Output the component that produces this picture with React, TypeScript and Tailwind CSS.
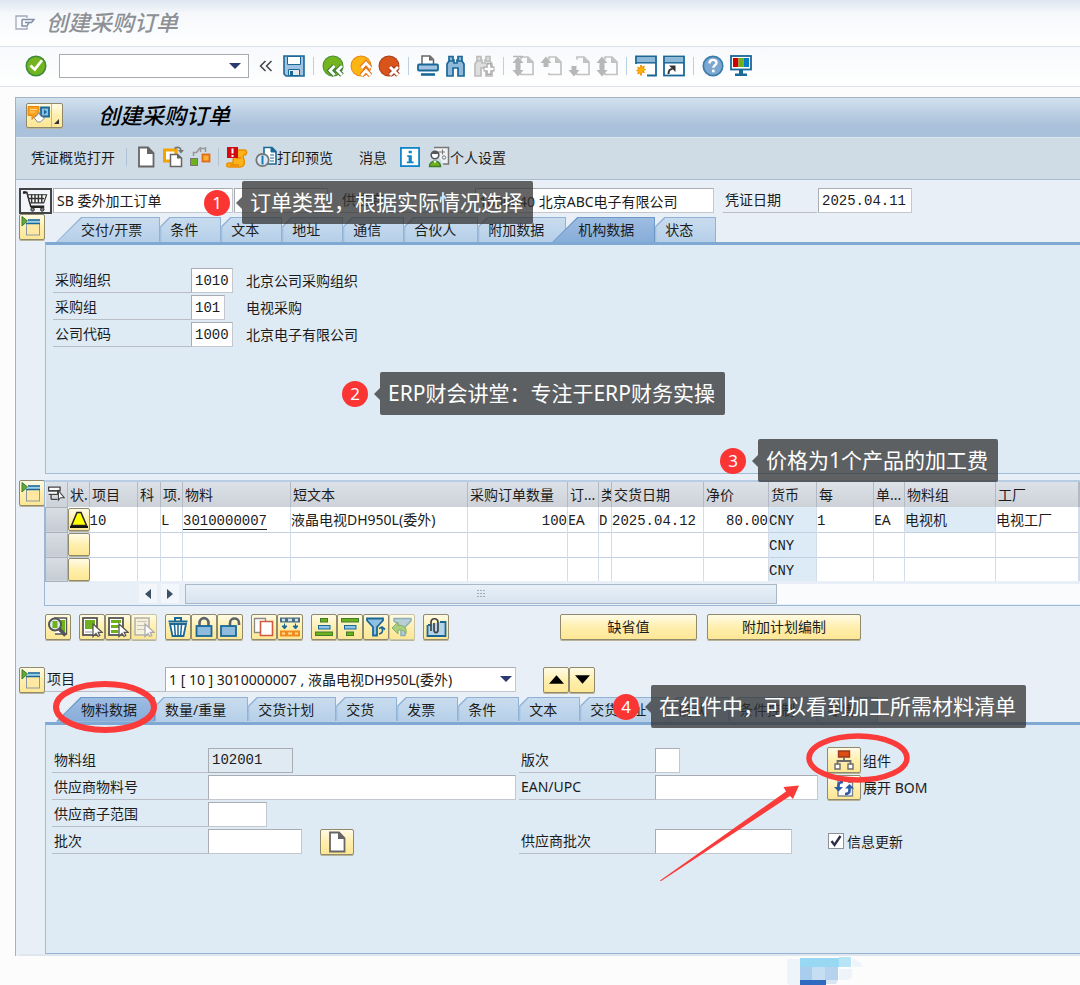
import React from "react";

type Kids = { children?: React.ReactNode };

const BLUE = "#1a6896";
const LIGHT = "#9fc3e0";
const GRAY = "#666666";
const GREEN = "#6fb11c";

function Icon({ children, size = "w-[22px] h-[22px]" }: Kids & { size?: string }) {
  return (
    <svg viewBox="0 0 22 22" className={`${size} shrink-0`} fill="none" aria-hidden="true">
      {children}
    </svg>
  );
}

/* ---------- toolbar drawings ---------- */

const CheckIcon = () => (
  <Icon>
    <circle cx="11" cy="11" r="10.5" fill="#3f8a3a" />
    <circle cx="11" cy="11" r="9" fill="#74b51f" />
    <path d="M4.5 11.5l2-2 3 3 6.5-8 2 1.5-8 10.5z" fill="#fff" />
  </Icon>
);
const SaveIcon = () => (
  <Icon>
    <path d="M1 1h20v20H3l-2-2z" fill={LIGHT} stroke={BLUE} strokeWidth="1.6" />
    <path d="M4.500 1.500h13v8h-13z" fill="#fff" stroke={BLUE} />
    <path d="M5.500 14.500h11v6h-11z" fill="#e5e9ec" stroke={BLUE} />
    <path d="M7 16h3v4.500H7z" fill={BLUE} />
  </Icon>
);
const BackIcon = () => (
  <Icon>
    <circle cx="11" cy="11" r="10.500" fill="#4b8f3c" />
    <circle cx="11" cy="11" r="9.500" fill="#74b51f" />
    <path d="M12.500 11L8 15.500l4.500 4.500M20 11l-4.500 4.500L20 20" stroke="#3c7a38" strokeWidth="5" />
    <path d="M12.500 11L8 15.500l4.500 4.500M20 11l-4.500 4.500L20 20" stroke="#fff" strokeWidth="2.800" />
  </Icon>
);
const ExitIcon = () => (
  <Icon>
    <circle cx="11" cy="11" r="10.500" fill="#e8881a" />
    <circle cx="11" cy="11" r="9.500" fill="#fcb614" />
    <path d="M11.500 13l4.500-5 4.500 5M11.500 20.500l4.500-5 4.500 5" stroke="#e8701a" strokeWidth="5" />
    <path d="M11.500 13l4.500-5 4.500 5M11.500 20.500l4.500-5 4.500 5" stroke="#fff" strokeWidth="2.800" />
  </Icon>
);
const CancelIcon = () => (
  <Icon>
    <circle cx="11" cy="11" r="10.500" fill="#a9401c" />
    <circle cx="11" cy="11" r="9.500" fill="#d9541a" />
    <path d="M12 12l8 8M20 12l-8 8" stroke="#a33a1a" strokeWidth="5" />
    <path d="M12 12l8 8M20 12l-8 8" stroke="#fff" strokeWidth="3" />
  </Icon>
);
const PrintIcon = () => (
  <Icon>
    <path d="M5 9V1h8l3.500 3.500V9" fill="#fff" stroke={GRAY} strokeWidth="1.500" />
    <path d="M12 1v4.500h4.500z" fill={GRAY} />
    <rect x="1" y="9.500" width="20" height="6" rx="1" fill={LIGHT} stroke={BLUE} strokeWidth="1.800" />
    <path d="M4 19.500h14" stroke={BLUE} strokeWidth="2.600" />
  </Icon>
);
function Binoculars({ a, b, plus }: { a: string; b: string; plus?: boolean }) {
  return (
    <Icon>
      <path d="M4 1.500h4V5h1v3h3V5h1V1.500h4V6l2 3v12h-6v-8H8v8H2V9l2-3z" fill={b} stroke={a} strokeWidth="1.700" />
      <path d="M4 6h4M13 6h4" stroke={a} strokeWidth="1.500" />
      {plus && <path d="M16 8v12M10.500 14h11" stroke="#aaa" strokeWidth="5" />}
      {plus && <path d="M16 9.500v9M11.500 14h9" stroke="#fff" strokeWidth="2.500" />}
    </Icon>
  );
}
function PageIcon({ up, down, inset }: { up?: boolean; down?: boolean; inset?: boolean }) {
  return (
    <Icon>
      <path d="M9 4.500V2h7l5 5v12.500H9V18" stroke="#c2c2c2" strokeWidth="1.700" />
      <path d="M15 1.500V8h6.500z" fill="#c2c2c2" />
      {up && <path d="M6 1.500L11.500 8H8.500v4h-5V8H.5z" fill="#b7b7b7" />}
      {down && <path d="M6 21.500l5.500-6.500H8.500v-4h-5v4H.5z" fill="#b7b7b7" />}
      {inset && <path d="M1 1.500h10" stroke="#b7b7b7" strokeWidth="1.500" />}
    </Icon>
  );
}
const NewSessionIcon = () => (
  <Icon>
    <path d="M1 9V1.500h20v19h-9" fill="#fff" stroke={BLUE} strokeWidth="1.800" />
    <path d="M2 2.500h18V7H2z" fill="#8db8d8" />
    <path d="M1 7.800h20" stroke={BLUE} strokeWidth="1.500" />
    <path d="M6 10l1 2.200 2.300-1-1 2.300 2.200 1-2.200 1 1 2.300-2.300-1L6 20.500l-1-2.700-2.300 1 1-2.300-2.200-1 2.200-1-1-2.300 2.300 1z" fill="#ffb400" stroke="#f29100" />
  </Icon>
);
const ShortcutIcon = () => (
  <Icon>
    <rect x="1" y="1.500" width="20" height="19" fill="#fff" stroke={BLUE} strokeWidth="1.800" />
    <path d="M2 2.500h18V7H2z" fill="#8db8d8" />
    <path d="M1 7.800h20" stroke={BLUE} strokeWidth="1.500" />
    <path d="M5.500 19c0-4 1-5 4-5" stroke="#333" strokeWidth="2" />
    <path d="M6 10.500h6.500V17z" fill="#333" />
  </Icon>
);
const HelpIcon = () => (
  <Icon>
    <circle cx="11" cy="11" r="9.700" fill="#7ba7d0" stroke="#3c7cab" strokeWidth="1.700" />
    <path d="M7.500 8.500c0-5 7-4.500 7-.8 0 2.500-3.200 2.500-3.200 5" stroke="#fff" strokeWidth="2.400" />
    <rect x="10" y="14.700" width="2.600" height="2.600" fill="#fff" />
  </Icon>
);
const MonitorIcon = () => (
  <Icon>
    <rect x="1" y="1" width="20" height="13.500" fill="#fff" stroke={BLUE} strokeWidth="1.800" />
    <path d="M3 3h5.500v9H3z" fill="#d00000" />
    <path d="M8.500 3h5v9h-5z" fill={GREEN} />
    <path d="M13.500 3H19v9h-5.500z" fill="#0a7cc4" />
    <path d="M9 15h4v4H9zM5 18.500h12v2.500H5z" fill={BLUE} />
  </Icon>
);
const BlankPage = () => (
  <Icon>
    <path d="M4 1.500h9l5.500 5.500v13.500H4z" fill="#fff" stroke={GRAY} strokeWidth="1.800" />
    <path d="M12 1v7h7z" fill={GRAY} />
  </Icon>
);
const CopyRefIcon = () => (
  <Icon>
    <path d="M2.500 4h11.500v11H2.500z" fill="#fff" stroke="#f5a300" strokeWidth="3" />
    <path d="M8.500 8.500h7l4 3.500v8.500h-11z" fill="#fff" stroke={GRAY} strokeWidth="1.500" />
    <path d="M15 8v4.500h5z" fill={GRAY} />
    <path d="M12.500 2.500C15.500.5 18.500 1.500 19 4" stroke="#777" strokeWidth="1.600" />
    <path d="M16 4h6l-3 3.500z" fill="#777" />
  </Icon>
);
const FlowIcon = () => (
  <Icon>
    <rect x="1.500" y="12.500" width="7" height="7" fill={GREEN} stroke="#777" />
    <rect x="13.500" y="8.500" width="7" height="7" fill="#ffae2b" stroke="#e06a1c" strokeWidth="1.800" />
    <path d="M4.500 10V6.500h3l3-4h6" stroke="#999" strokeWidth="1.600" />
    <path d="M11.500 1v5M16.500 1v5" stroke="#999" strokeWidth="1.500" />
  </Icon>
);
const HoldIcon = () => (
  <Icon>
    <path d="M8 4h10c4 0 3 5 0 5-1 0-1 2 0 5 1 4 0 7-4 7H3c-3 0-3-4 0-4h4z" fill="#ffb31a" stroke="#ef8d00" strokeWidth="1.500" />
    <path d="M10 12h5M4 19h9" stroke="#e88800" strokeWidth="1.500" />
    <rect x="1" y="1" width="11" height="11" fill="#d20a11" />
    <path d="M6.500 2.500v5M6.500 9v2" stroke="#fff" strokeWidth="2" />
  </Icon>
);
const PreviewIcon = () => (
  <Icon>
    <path d="M9 1.500h8l4 4V18H9z" fill="#fff" stroke={BLUE} strokeWidth="1.600" />
    <path d="M16 1v5h5zM15 9h4M15 12h4M15 15h4" stroke={BLUE} fill={BLUE} />
    <circle cx="7.500" cy="14" r="6.200" fill="#dbe9f4" stroke="#777" strokeWidth="1.800" />
    <path d="M7.500 9.500v9" stroke="#1d78b5" strokeWidth="2" />
  </Icon>
);
const InfoIcon = () => (
  <Icon size="w-[20px] h-[20px]">
    <rect x="1" y="1" width="20" height="20" fill="#fff" stroke="#1186c8" strokeWidth="2" />
    <path d="M9.500 4h3.500v3H9.500zM8 9h5v7h2v2H7.500v-2H9.500v-5H8z" fill="#1186c8" />
  </Icon>
);
const PersonIcon = () => (
  <Icon>
    <path d="M6 1.500h14.500V18H15" fill="#eef2f5" stroke="#777" strokeWidth="1.500" />
    <path d="M10 6h7M14.500 3.500v5" stroke="#777" />
    <circle cx="16" cy="11.500" r="1.700" stroke="#777" />
    <circle cx="7" cy="9" r="3.800" fill="#fff" stroke="#555" strokeWidth="1.600" />
    <path d="M3.500 8c1-3.500 6-3.500 7 0z" fill="#555" />
    <path d="M1.500 20.500c0-7 11-7 11 0z" fill={GREEN} stroke="#3f7d2d" strokeWidth="1.500" />
    <path d="M5.500 15l1.500 2.500L8.500 15z" fill="#fff" />
  </Icon>
);
const PanelIcon = () => (
  <Icon>
    <rect x="5.500" y="7.500" width="13" height="11.500" fill="#ffe9a2" stroke="#8c98a0" />
    <path d="M7 3.500h12v4H7z" fill="#9fd0ee" />
    <path d="M7 4h12M5 7.500h14" stroke={BLUE} strokeWidth="1.600" />
    <path d="M1 .5l5.500 4.500-5.500 5z" fill="#63a83a" stroke="#3d7d2b" />
  </Icon>
);
const CartIcon = () => (
  <svg viewBox="0 0 30 24" className="h-[24px] w-[30px]" fill="none" aria-hidden="true">
    <path d="M3 3h3l4 14.500h14" stroke="#222" strokeWidth="1.500" />
    <path d="M2 2h3v2.500H2z" fill="#222" />
    <path d="M7 5.500h19.500l-3 8.500H9z" fill="#fff" stroke="#333" strokeWidth="1.200" />
    <path d="M11 5v9M14.500 5v9M18 5v9M21.500 5v9M8 9.500h16" stroke="#333" strokeWidth="1.500" />
    <path d="M10 18.500h14" stroke="#222" strokeWidth="1.500" />
    <circle cx="12" cy="20.800" r="1.800" fill="#888" stroke="#222" />
    <circle cx="22" cy="20.800" r="1.800" fill="#888" stroke="#222" />
  </svg>
);
const ServicesIcon = () => (
  <svg viewBox="0 0 24 20" className="h-[20px] w-[24px]" fill="none" aria-hidden="true">
    <path d="M14 2.500h8v9h-8z" fill="#8cc0e4" stroke={BLUE} strokeWidth="1.800" />
    <path d="M17 4.500v5l3-2.500z" fill={BLUE} />
    <path d="M1 1.500h11v9H8l-3 4v-4H1z" fill="#fba21c" stroke="#ea8409" />
    <path d="M3 4.500h7M3 7h5" stroke="#ffd98c" />
    <path d="M7 12.500l3-2 2-3 1.500 3.500 4 2-4 4h-3z" fill="#fff" stroke="#8a8a8a" />
  </svg>
);

/* ---------- item toolbar drawings ---------- */

const Cursor = ({ c = "#555" }: { c?: string }) => (
  <path d="M12 8v12.500l3-3 2 3 1.700-1-1.500-3.200h4z" fill="#fff" stroke={c} strokeWidth="1.300" />
);
const DetailIcon = () => (
  <Icon>
    <path d="M7 2h12.500v16H8" fill="#fff" stroke="#555" strokeWidth="1.400" />
    <path d="M12 4h6v12h-6z" fill={GREEN} />
    <circle cx="8" cy="8.500" r="6" fill="#dcecf2" stroke="#555" strokeWidth="2" />
    <path d="M5.500 5h5v7h-5z" fill={GREEN} />
    <path d="M12.500 13l6 6.500" stroke="#555" strokeWidth="3.500" />
  </Icon>
);
const SelectAllIcon = () => (
  <Icon>
    <rect x="2" y="2" width="14" height="17" fill="#fff" stroke="#555" strokeWidth="1.800" />
    <path d="M4 4h10v9H4z" fill={GREEN} />
    <path d="M4 16h7" stroke="#999" />
    <Cursor />
  </Icon>
);
const SelectBlockIcon = () => (
  <Icon>
    <rect x="2" y="2" width="14" height="17" fill="#fff" stroke="#555" strokeWidth="1.800" />
    <path d="M4 5.500h10M4 15.500h7" stroke={GREEN} strokeWidth="3" />
    <path d="M4 10.500h10" stroke={GREEN} strokeWidth="3" />
    <Cursor />
  </Icon>
);
const DeselectIcon = () => (
  <Icon>
    <rect x="2" y="2" width="14" height="17" fill="#f6f1dc" stroke="#b9b6a8" strokeWidth="1.600" />
    <path d="M4 5.500h10M4 9.500h10M4 13.500h8" stroke="#c6c3b4" />
    <Cursor c="#aaa" />
  </Icon>
);
const TrashIcon = () => (
  <Icon>
    <path d="M1.500 5.500h19M8 4.500V2h6v2.500" stroke={BLUE} strokeWidth="2" />
    <path d="M3 8h16l-2.500 12h-11z" fill="#fff" stroke={BLUE} strokeWidth="1.800" />
    <path d="M7.500 9l.8 10M14.500 9l-.8 10M11 9v10" stroke={BLUE} strokeWidth="1.500" />
  </Icon>
);
function LockIcon({ open }: { open?: boolean }) {
  return (
    <Icon>
      {open ? (
        <path d="M11 10V7c0-6 9-6 9 0v2" stroke="#5d6468" strokeWidth="2.600" />
      ) : (
        <path d="M6.500 10V7c0-6.500 9-6.500 9 0v3" stroke="#5d6468" strokeWidth="2.600" />
      )}
      <rect x={open ? 2 : 3.500} y="10" width="15" height="10" fill="#8fbbdc" stroke={BLUE} strokeWidth="1.800" />
    </Icon>
  );
}
const CopyIcon = () => (
  <Icon>
    <path d="M1.500 2.500h11v14h-11z" fill="#fff" stroke="#8a8a8a" strokeWidth="1.300" />
    <path d="M7.500 5.500h12v14h-12z" fill="#fff" stroke="#cf5a3c" strokeWidth="1.600" />
  </Icon>
);
const MassIcon = () => (
  <Icon>
    <path d="M1 1.500h20v5H1z" fill="#4c6d80" />
    <path d="M3 4h3M9 4h4M16 4h3" stroke="#cfe3ee" strokeWidth="2.500" />
    <path d="M5.500 7.500v4M16.500 7.500v4M3 10l2.500 3 2.500-3zM14 10l2.500 3 2.500-3z" stroke={BLUE} fill={BLUE} />
    <path d="M1 14.500h20v6H1z" fill="#f28a1d" />
    <path d="M3 17.500h3M9 17.500h4M16 17.500h3" stroke="#ffe08a" strokeWidth="2" />
  </Icon>
);
function SortIcon({ down }: { down?: boolean }) {
  return (
    <Icon>
      <rect x={down ? 2.5 : 7.500} y="2.500" width={down ? 17 : 7} height="3.500" fill={GREEN} stroke="#3d7d2b" />
      <rect x="5.500" y="9.500" width="11.500" height="3.500" fill="#8dc4e8" stroke={BLUE} />
      <rect x={down ? 7.500 : 2.5} y="16" width={down ? 7 : 17} height="3.500" fill={GREEN} stroke="#3d7d2b" />
    </Icon>
  );
}
const FilterIcon = () => (
  <Icon>
    <path d="M2 2.500h16v2L12 11v8.500H8V11L2 4.500z" fill="#8fc0e2" stroke={BLUE} strokeWidth="1.800" />
    <path d="M14 18c4-1 4-3 3-6M14 12.500l3-1.500 3 2.500" stroke={BLUE} strokeWidth="1.700" />
  </Icon>
);
const FilterOffIcon = () => (
  <Icon>
    <path d="M3 2.500h17v2.500L14 11v8.500h-4V11L3 5z" fill="#b7cfd5" stroke="#8caeb8" strokeWidth="1.500" />
    <path d="M1 12l6-6v3.500c7-1 9 4 8 8-1.500-3-4-4-8-3.500V18z" fill="#a9cf7f" stroke="#86b06b" />
  </Icon>
);
const AttachIcon = () => (
  <Icon>
    <path d="M3 9h3M15 6h5.500v14H2.500V9" fill="#b4d4ea" stroke={BLUE} strokeWidth="1.800" />
    <path d="M6 15V6.500c0-5 7-5 7 0V14c0 3.500-4 3.500-4 0V7" stroke="#444" strokeWidth="1.700" />
  </Icon>
);
const ComponentsIcon = () => (
  <Icon>
    <path d="M5.500 2h11v6h-11z" fill="#dd4b16" stroke="#9e3a1a" strokeWidth="1.400" />
    <path d="M11 8v4M4.500 15v-3h13v3" stroke="#6b6b6b" strokeWidth="1.800" />
    <path d="M2 15h5v5H2zM15 15h5v5h-5z" fill="#fff" stroke="#6b6b6b" strokeWidth="1.400" />
  </Icon>
);
const RefreshIcon = () => (
  <Icon>
    <path d="M5 2.500h11l3.500 3.500v14H5z" fill="#fff" stroke="#7b8794" strokeWidth="1.400" />
    <path d="M15 2v5h5z" fill="#7b8794" />
    <path d="M5.500 12V9.500c0-2 1-3.500 4.500-3.500" stroke="#2b5aa8" strokeWidth="2.600" />
    <path d="M1 11h9l-4.500 4.500z" fill="#2b5aa8" />
    <path d="M16.500 12v2.500c0 2-1 3.500-4.500 3.500" stroke="#2b5aa8" strokeWidth="2.600" />
    <path d="M12 12.500h9L16.500 8z" fill="#2b5aa8" />
  </Icon>
);
const ConfigIcon = () => (
  <Icon size="w-[18px] h-[18px]">
    <path d="M2 2.500h14v4.500H2zM2 11.500h11v-4H2M5 17.500h8M5 11.500v6" stroke="#444" strokeWidth="1.600" fill="#fff" />
    <path d="M14 7v11.500l2.500-3h4.500z" fill="#fff" stroke="#444" strokeWidth="1.300" />
  </Icon>
);

/* ---------- shared controls ---------- */

const gold =
  "flex shrink-0 items-center justify-center rounded-xs border border-[#8f8a6c] bg-linear-to-b from-[#fffbe6] via-[#ffefae] to-[#fde795] shadow-[0_1px_0_#b9b39a]";

function GoldIcon({ label, children, size = "w-[26px] h-[26px]", faded }: Kids & { label: string; size?: string; faded?: boolean }) {
  return (
    <button type="button" aria-label={label} className={`${gold} ${size} ${faded ? "border-[#c9c4a6]" : ""}`}>
      {children}
    </button>
  );
}

function Bare({ label, children }: Kids & { label: string }) {
  return (
    <button type="button" aria-label={label} className="shrink-0">
      {children}
    </button>
  );
}

const Sep = () => <span className="mx-[2px] h-[18px] w-px shrink-0 bg-[#bcd0e4]" />;

const box = "h-[25px] shrink-0 border border-[#a9adb3] border-r-[#c3c8cf] border-b-[#c3c8cf] bg-white px-[3px] outline-none";
const mono = "font-['Liberation_Mono','Noto_Sans_CJK_SC',monospace]";
const rule = "flex h-[25px] shrink-0 items-end border-b border-[#b9bec4] pb-[2px] pl-[2px] leading-5";

type TabItem = { name: string; shape: "first" | "active" | "plain"; pull?: boolean };

function Tabs({ items }: { items: TabItem[] }) {
  return (
    <div role="tablist" className="flex h-[25px] pl-[11px]">
      {items.map((t) => {
        const wide = t.shape !== "plain";
        const clip = wide
          ? "[clip-path:polygon(25px_0,100%_0,100%_100%,0_100%)]"
          : "[clip-path:polygon(9px_0,100%_0,100%_100%,0_100%,0_9px)]";
        const tone = t.shape === "active" ? "from-[#9dbce2] to-[#86add9]" : "from-[#c9dcef] to-[#b5cfe8]";
        const edge = t.shape === "active" ? "bg-[#6d98c8]" : "bg-[#8fb2d6]";
        const wideEnd = t.pull ? "pl-[26px] pr-[21px]" : "pl-[25px] pr-[18px]";
        const plainEnd = t.name.length === 2 ? "pl-[10px] pr-[23px]" : "pl-[10px] pr-[22px]";
        return (
          <button
            key={t.name}
            type="button"
            role="tab"
            aria-selected={t.shape === "active"}
            className={`relative shrink-0 whitespace-nowrap leading-[25px] ${wide ? wideEnd : plainEnd} ${t.pull ? "-ml-[14px]" : ""}`}
          >
            <span className={`absolute inset-0 ${edge} ${clip}`} />
            <span className={`absolute inset-x-px top-px bottom-0 bg-linear-to-b ${tone} ${clip}`} />
            <span className="relative">{t.name}</span>
          </button>
        );
      })}
    </div>
  );
}

function Callout({ n, text, at }: { n: number; text: string; at: string }) {
  return (
    <div className={`absolute flex items-center ${at}`}>
      <span className="flex h-[26px] w-[26px] items-center justify-center rounded-full bg-[#fb3434] text-[17px] text-white">{n}</span>
      <span className="ml-[6px] border-y-[6px] border-r-[6px] border-y-transparent border-r-[#323232]/75" />
      <span className="h-[43px] whitespace-nowrap rounded-xs bg-[#323232]/75 pr-[10px] pl-2 text-[21px] leading-[43px] text-white">{text}</span>
    </div>
  );
}

function OrgRow({ id, label, value, text, width }: { id: string; label: string; value: string; text: string; width: string }) {
  return (
    <div className="flex h-[25px]">
      <label htmlFor={id} className={`${rule} w-[138px]`}>{label}</label>
      <input id={id} defaultValue={value} className={`${box} ${mono} ${width}`} />
      <span className={`leading-[25px] ${width === "w-[34px]" ? "ml-[21px]" : "ml-[13px]"}`}>{text}</span>
    </div>
  );
}

/* ---------- item table ---------- */

const columns: { head: string; width: string }[] = [
  { head: "状.", width: "w-[22px]" },
  { head: "项目", width: "w-[48px]" },
  { head: "科", width: "w-[23px]" },
  { head: "项.", width: "w-[22px]" },
  { head: "物料", width: "w-[108px]" },
  { head: "短文本", width: "w-[177px]" },
  { head: "采购订单数量", width: "w-[100px]" },
  { head: "订...", width: "w-[31px]" },
  { head: "类", width: "w-[13px]" },
  { head: "交货日期", width: "w-[92px]" },
  { head: "净价", width: "w-[65px]" },
  { head: "货币", width: "w-[48px]" },
  { head: "每", width: "w-[57px]" },
  { head: "单...", width: "w-[31px]" },
  { head: "物料组", width: "w-[91px]" },
  { head: "工厂", width: "w-[83px]" },
  { head: "", width: "w-auto" },
];

const rows: string[][] = [
  ["10", "", "L", "3010000007", "液晶电视DH950L(委外)", "100", "EA", "D", "2025.04.12", "80.00", "CNY", "1", "EA", "电视机", "电视工厂", ""],
  ["", "", "", "", "", "", "", "", "", "", "CNY", "", "", "", "", ""],
  ["", "", "", "", "", "", "", "", "", "", "CNY", "", "", "", "", ""],
];

const sansCols = [4, 6, 12, 13, 14];

function ItemTable() {
  return (
    <table className="w-full table-fixed border-collapse">
      <thead>
        <tr className="h-[25px] bg-linear-to-b from-[#dde1e8] to-[#cdd2d9]">
          <th className="w-[22px] border-r border-[#b3bac4] p-0">
            <button type="button" aria-label="表格配置" className="flex w-full justify-center">
              <ConfigIcon />
            </button>
          </th>
          {columns.map((c) => (
            <th key={c.head} className={`${c.width} overflow-hidden whitespace-nowrap border-r border-[#b3bac4] p-0 pl-[2px] text-left leading-6 font-normal`}>
              {c.head}
            </th>
          ))}
        </tr>
      </thead>
      <tbody>
        {rows.map((r, i) => (
          <tr key={i} className="h-[25px] border-b border-[#c3d0e2] bg-white last:h-[24px] last:border-b-0">
            <td className="border border-[#a8b2be] bg-linear-to-b from-[#d9dde4] to-[#c6ccd4] p-0" />
            <td className="p-0">
              <button type="button" aria-label={`状态 ${i + 1}`} className={`${gold} h-[23px] w-[22px]`}>
                {i === 0 && (
                  <svg viewBox="0 0 20 21" className="h-[21px] w-[20px]" aria-hidden="true">
                    <path d="M8 3.500h4l5.500 13h-15z" fill="#ff0" stroke="#222" strokeWidth="1.500" />
                    <path d="M1 18h18" stroke="#111" strokeWidth="2" />
                  </svg>
                )}
              </button>
            </td>
            {r.map((v, j) => (
              <td
                key={j}
                className={`overflow-hidden whitespace-nowrap border-r border-[#d3dce8] p-0 ${
                  sansCols.includes(j) ? "leading-[23px]" : `pt-[3px] leading-5 ${mono}`
                } ${j === 5 || j === 9 ? "text-right" : ""} ${j === 10 || (j === 13 && i === 0) ? "bg-[#dcebf6]" : ""}`}
              >
                {j === 3 && v ? (
                  <a href="#material" className="border-b border-[#222]">{v}</a>
                ) : (
                  v
                )}
              </td>
            ))}
          </tr>
        ))}
      </tbody>
    </table>
  );
}

/* ---------- page ---------- */

export default function App() {
  return (
    <div className="relative min-h-screen overflow-hidden bg-[#fcfcfd] font-['Noto_Sans','Noto_Sans_CJK_SC',sans-serif] text-[14px] text-[#1c1c1c]">
      <header className="flex h-[47px] items-center gap-[11px] border-b border-[#dfe4ec] bg-linear-to-b from-[#dfe7f2] via-[#f6f8fb] via-30% to-white pb-[2px] pl-[15px]">
        <svg viewBox="0 0 20 15" className="h-[15px] w-[20px]" fill="none" aria-hidden="true">
          <path d="M12 3V1H1v13h11v-2" stroke="#a2aabb" strokeWidth="1.300" />
          <path d="M7 4.500h12l-2.500 3h-3M7 4.500V11h5l2-3.500H10" stroke="#8590a8" strokeWidth="1.500" />
        </svg>
        <h1 className="text-[22px] leading-8 font-medium italic text-[#8d9095]">创建采购订单</h1>
      </header>

      <div className="flex h-[40px] items-center gap-[6px] border-b border-[#dfe4ec] bg-linear-to-b from-[#f7f9fc] to-white pb-px pl-[25px]">
        <Bare label="回车"><CheckIcon /></Bare>
        <div className="relative ml-[6px]">
          <input aria-label="命令" className="block h-[24px] w-[190px] border border-[#a6abb2] bg-white px-1 outline-none" />
          <svg viewBox="0 0 12 6" className="absolute top-[9px] right-[8px] h-[6px] w-[12px]" aria-hidden="true">
            <path d="M0 0h12L6 6z" fill="#2a3a70" />
          </svg>
        </div>
        <button type="button" aria-label="收起命令字段" className="mx-[4px] flex h-[22px] w-[14px] items-center">
          <svg viewBox="0 0 14 12" className="h-[12px] w-[14px]" fill="none" aria-hidden="true">
            <path d="M6.500 1l-5 5 5 5M12.500 1l-5 5 5 5" stroke="#444" strokeWidth="1.500" />
          </svg>
        </button>
        <Bare label="保存"><SaveIcon /></Bare>
        <Sep />
        <Bare label="返回"><BackIcon /></Bare>
        <Bare label="退出"><ExitIcon /></Bare>
        <Bare label="取消"><CancelIcon /></Bare>
        <Sep />
        <Bare label="打印"><PrintIcon /></Bare>
        <Bare label="查找"><Binoculars a={BLUE} b="#8fb9da" /></Bare>
        <Bare label="继续查找"><Binoculars a="#bdbdbd" b="#dedede" plus /></Bare>
        <Sep />
        <Bare label="第一页"><PageIcon up down inset /></Bare>
        <Bare label="上一页"><PageIcon up /></Bare>
        <Bare label="下一页"><PageIcon down /></Bare>
        <Bare label="最后一页"><PageIcon up down /></Bare>
        <Sep />
        <Bare label="新建会话"><NewSessionIcon /></Bare>
        <Bare label="快捷方式"><ShortcutIcon /></Bare>
        <Sep />
        <Bare label="帮助"><HelpIcon /></Bare>
        <Bare label="定制布局"><MonitorIcon /></Bare>
      </div>

      <main className="mt-[10px] ml-[15px] border-t border-l border-[#a3b3c6] bg-[#e8eff7]">
        <div className="flex h-[39px] items-center bg-linear-to-b from-[#d2e1ee] to-[#a9c1da] to-70% pb-[5px] pl-[10px]">
          <button type="button" aria-label="对象服务" className={`${gold} h-[25px] w-[37px]`}>
            <ServicesIcon />
            <span className="flex h-full flex-1 items-end justify-end border-l border-[#c4b98a] pr-[3px] pb-[3px]">
              <svg viewBox="0 0 5 5" className="h-[5px] w-[5px]" aria-hidden="true"><path d="M5 0v5H0z" fill="#333" /></svg>
            </span>
          </button>
          <h2 className="ml-[35px] text-[22px] leading-8 font-medium italic text-black">创建采购订单</h2>
        </div>

        <div className="flex h-[43px] items-center border-y border-t-[#dde7ef] border-b-[#a9bccd] bg-[#cfdce6] pb-[3px] pl-[15px] whitespace-nowrap">
          <button type="button">凭证概览打开</button>
          <span className="mr-[8px] ml-[11px] h-[18px] w-px bg-[#afc3d7]" />
          <Bare label="新建"><BlankPage /></Bare>
          <span className="w-[5px]" />
          <Bare label="参照创建"><CopyRefIcon /></Bare>
          <span className="w-[5px]" />
          <Bare label="其他采购订单"><FlowIcon /></Bare>
          <span className="mx-[7px] h-[18px] w-px bg-[#afc3d7]" />
          <Bare label="暂存"><HoldIcon /></Bare>
          <button type="button" className="ml-[7px] flex items-center"><PreviewIcon />打印预览</button>
          <button type="button" className="ml-[26px]">消息</button>
          <span className="w-[13px]" />
          <Bare label="帮助信息"><InfoIcon /></Bare>
          <button type="button" className="ml-[8px] flex items-center"><PersonIcon />个人设置</button>
        </div>

        <section className="pt-[8px] pl-[3px]">
          <div className="flex h-[26px] gap-px">
            <div className="flex w-[33px] shrink-0 items-center justify-center border-2 border-[#444] bg-[#f2f5fa]"><CartIcon /></div>
            <select aria-label="订单类型" className={`${box} w-[180px] appearance-none`}>
              <option>SB 委外加工订单</option>
            </select>
            <input aria-label="采购订单" className={`${box} w-[94px]`} />
            <label htmlFor="vendor" className={`${rule} ml-[11px] w-[134px]`}>供应商</label>
            <input id="vendor" defaultValue="1000040 北京ABC电子有限公司" className={`${box} w-[239px]`} />
            <label htmlFor="docdate" className={`${rule} ml-[8px] w-[94px]`}>凭证日期</label>
            <input id="docdate" defaultValue="2025.04.11" className={`${box} ${mono} w-[94px]`} />
          </div>

          <div className="flex">
            <div className="w-[26px] shrink-0"><GoldIcon label="折叠抬头"><PanelIcon /></GoldIcon></div>
            <div className="min-w-0 flex-1 pt-[3px]">
              <Tabs
                items={[
                  { name: "交付/开票", shape: "first" },
                  { name: "条件", shape: "plain" },
                  { name: "文本", shape: "plain" },
                  { name: "地址", shape: "plain" },
                  { name: "通信", shape: "plain" },
                  { name: "合伙人", shape: "plain" },
                  { name: "附加数据", shape: "plain" },
                  { name: "机构数据", shape: "active", pull: true },
                  { name: "状态", shape: "plain" },
                ]}
              />
              <div className="flex flex-col gap-[2px] border-t-[3px] border-b border-l border-t-[#7fa8d2] border-b-[#a3bcd8] border-l-[#a3bcd8] bg-[#deebf5] pt-[23px] pb-[126px] pl-[7px]">
                <OrgRow id="org" label="采购组织" value="1010" text="北京公司采购组织" width="w-[42px]" />
                <OrgRow id="grp" label="采购组" value="101" text="电视采购" width="w-[34px]" />
                <OrgRow id="cc" label="公司代码" value="1000" text="北京电子有限公司" width="w-[42px]" />
              </div>
            </div>
          </div>
        </section>

        <section className="pt-[6px] pl-[3px]">
          <div className="flex">
            <div className="w-[25px] shrink-0"><GoldIcon label="折叠项目概览"><PanelIcon /></GoldIcon></div>
            <div className="min-w-0 flex-1 border-t-2 border-b border-l border-t-[#b7cde4] border-b-[#9bb8d6] border-l-[#9bb8d6]">
              <ItemTable />
              <div className="flex h-[23px] items-center pt-[1px] pl-[94px]">
                <button type="button" aria-label="向左滚动" className="flex h-[19px] w-[18px] items-center justify-center bg-[#f3f6fa]">
                  <svg viewBox="0 0 6 10" className="h-[10px] w-[6px]" aria-hidden="true"><path d="M6 0v10L0 5z" fill="#3c5064" /></svg>
                </button>
                <button type="button" aria-label="向右滚动" className="ml-[4px] flex h-[19px] w-[18px] items-center justify-center bg-[#f3f6fa]">
                  <svg viewBox="0 0 6 10" className="h-[10px] w-[6px]" aria-hidden="true"><path d="M0 0v10l6-5z" fill="#3c5064" /></svg>
                </button>
                <div className="ml-[6px] flex h-[20px] flex-1 bg-[#fafbfc]">
                  <div className="flex h-full w-[592px] items-center justify-center border border-[#a9b9c8] bg-linear-to-b from-[#e9f0f7] to-[#d7e3ee]">
                    <svg viewBox="0 0 8 7" className="h-[7px] w-[8px]" aria-hidden="true">
                      <path d="M1 0v1M4 0v1M7 0v1M1 3v1M4 3v1M7 3v1M1 6v1M4 6v1M7 6v1" stroke="#8d9aa8" strokeWidth="1.500" />
                    </svg>
                  </div>
                </div>
              </div>
            </div>
          </div>

          <div className="mt-[8px] ml-[26px] flex items-center">
            <GoldIcon label="明细"><DetailIcon /></GoldIcon>
            <div className="ml-[8px] flex">
              <GoldIcon label="全选"><SelectAllIcon /></GoldIcon>
              <GoldIcon label="选择块"><SelectBlockIcon /></GoldIcon>
              <GoldIcon label="取消选择" faded><DeselectIcon /></GoldIcon>
            </div>
            <div className="ml-[8px] flex">
              <GoldIcon label="删除"><TrashIcon /></GoldIcon>
              <GoldIcon label="冻结"><LockIcon /></GoldIcon>
              <GoldIcon label="解冻"><LockIcon open /></GoldIcon>
            </div>
            <div className="ml-[8px] flex">
              <GoldIcon label="复制"><CopyIcon /></GoldIcon>
              <GoldIcon label="批量更改"><MassIcon /></GoldIcon>
            </div>
            <div className="ml-[8px] flex">
              <GoldIcon label="升序"><SortIcon /></GoldIcon>
              <GoldIcon label="降序"><SortIcon down /></GoldIcon>
              <GoldIcon label="过滤"><FilterIcon /></GoldIcon>
              <GoldIcon label="取消过滤" faded><FilterOffIcon /></GoldIcon>
            </div>
            <div className="ml-[8px] flex"><GoldIcon label="附件"><AttachIcon /></GoldIcon></div>
            <button type="button" className={`${gold} ml-[111px] h-[26px] w-[137px]`}>缺省值</button>
            <button type="button" className={`${gold} ml-[10px] h-[26px] w-[154px]`}>附加计划编制</button>
          </div>
        </section>

        <section className="pt-[27px] pl-[3px]">
          <div className="flex h-[27px]">
            <GoldIcon label="折叠项目明细"><PanelIcon /></GoldIcon>
            <label htmlFor="item" className={`${rule} w-[120px]`}>项目</label>
            <div className="relative">
              <select id="item" className={`${box} w-[351px] appearance-none`}>
                <option>1 [ 10 ] 3010000007 , 液晶电视DH950L(委外)</option>
              </select>
              <svg viewBox="0 0 12 6" className="pointer-events-none absolute top-[9px] right-[4px] h-[6px] w-[12px]" aria-hidden="true">
                <path d="M0 0h12L6 6z" fill="#2a3a70" />
              </svg>
            </div>
            <span className="w-[27px]" />
            <GoldIcon label="上一项目">
              <svg viewBox="0 0 16 9" className="h-[9px] w-[15px]" aria-hidden="true"><path d="M0 9h16L8 0z" fill="#000" /></svg>
            </GoldIcon>
            <GoldIcon label="下一项目">
              <svg viewBox="0 0 16 9" className="h-[9px] w-[15px]" aria-hidden="true"><path d="M0 0h16L8 9z" fill="#000" /></svg>
            </GoldIcon>
          </div>

          <div className="ml-[26px] pt-[3px]">
            <Tabs
              items={[
                { name: "物料数据", shape: "active" },
                { name: "数量/重量", shape: "plain" },
                { name: "交货计划", shape: "plain" },
                { name: "交货", shape: "plain" },
                { name: "发票", shape: "plain" },
                { name: "条件", shape: "plain" },
                { name: "文本", shape: "plain" },
                { name: "交货地址", shape: "plain" },
                { name: "确认", shape: "plain" },
                { name: "条件控制", shape: "plain" },
                { name: "零售", shape: "plain" },
              ]}
            />
            <div className="flex flex-col gap-[2px] border-t-[3px] border-b border-l border-t-[#7fa8d2] border-b-[#94b2d4] border-l-[#a3bcd8] bg-[#deebf5] pt-[23px] pb-[99px] pl-[6px]">
              <div className="flex h-[25px]">
                <label htmlFor="mg" className={`${rule} w-[156px]`}>物料组</label>
                <div className="w-[311px] shrink-0">
                  <input id="mg" readOnly defaultValue="102001" className={`h-[25px] w-[85px] border border-[#a9adb3] bg-[#dfeaf3] px-[3px] outline-none ${mono}`} />
                </div>
                <label htmlFor="rev" className={`${rule} w-[136px]`}>版次</label>
                <div className="w-[172px] shrink-0"><input id="rev" className={`${box} w-[25px]`} /></div>
                <button type="button" className="flex shrink-0 items-center gap-[2px]">
                  <span className={`${gold} h-[26px] w-[34px]`}><ComponentsIcon /></span>组件
                </button>
              </div>
              <div className="flex h-[25px]">
                <label htmlFor="vm" className={`${rule} w-[156px]`}>供应商物料号</label>
                <div className="w-[311px] shrink-0"><input id="vm" className={`${box} w-[308px]`} /></div>
                <label htmlFor="ean" className={`${rule} w-[136px]`}>EAN/UPC</label>
                <div className="w-[172px] shrink-0"><input id="ean" className={`${box} w-[163px]`} /></div>
                <button type="button" className="flex shrink-0 items-center gap-[2px]">
                  <span className={`${gold} h-[25px] w-[34px]`}><RefreshIcon /></span>展开 BOM
                </button>
              </div>
              <div className="flex h-[25px]">
                <label htmlFor="vs" className={`${rule} w-[156px]`}>供应商子范围</label>
                <input id="vs" className={`${box} w-[59px]`} />
              </div>
              <div className="flex h-[25px]">
                <label htmlFor="batch" className={`${rule} w-[156px]`}>批次</label>
                <div className="flex w-[311px] shrink-0 gap-[18px]">
                  <input id="batch" className={`${box} w-[94px]`} />
                  <GoldIcon label="新建批次" size="w-[34px] h-[26px]"><BlankPage /></GoldIcon>
                </div>
                <label htmlFor="vb" className={`${rule} w-[136px]`}>供应商批次</label>
                <div className="w-[173px] shrink-0"><input id="vb" className={`${box} w-[137px]`} /></div>
                <label className="flex items-center gap-[3px]">
                  <span className="relative flex">
                    <input type="checkbox" defaultChecked className="peer h-[16px] w-[16px] appearance-none border border-[#8d9299] bg-white" />
                    <svg viewBox="0 0 16 16" className="pointer-events-none absolute inset-0 hidden peer-checked:block" fill="none" aria-hidden="true">
                      <path d="M3.500 8l3 4 6-9" stroke="#2b2f4a" strokeWidth="2.400" />
                    </svg>
                  </span>
                  信息更新
                </label>
              </div>
            </div>
          </div>
          <div className="h-[2px] bg-[#dfe6ee]" />
        </section>
      </main>

      <footer className="flex pl-[787px]">
        <svg viewBox="0 0 76 29" className="h-[29px] w-[76px]" aria-hidden="true">
          <path d="M0 3h13v26H2L0 26zM52 13h13v8l-3 3H52zM65 2l9 5 2 4H65z" fill="#eef4fa" />
          <path d="M13 2h39v9H13z" fill="#98d8f2" />
          <path d="M52 1h12v10H52z" fill="#b8e5f6" />
          <path d="M13 11h12v13H13z" fill="#a9cdec" />
          <path d="M25 11h13v13H25z" fill="#c6def2" />
          <path d="M38 11h13v13H38z" fill="#b5d2ee" />
          <path d="M13 24h26v5H13z" fill="#2f69c0" />
          <path d="M39 24h12l-2 4H39z" fill="#dbe6f3" />
        </svg>
      </footer>

      <Callout n={1} at="top-[181px] left-[204px]" text="订单类型，根据实际情况选择" />
      <Callout n={2} at="top-[372px] left-[342px]" text="ERP财会讲堂：专注于ERP财务实操" />
      <Callout n={3} at="top-[439px] left-[720px]" text="价格为1个产品的加工费" />
      <Callout n={4} at="top-[685px] left-[613px]" text="在组件中，可以看到加工所需材料清单" />

      <svg viewBox="0 0 104 54" className="pointer-events-none absolute top-[680px] left-[53px] h-[54px] w-[104px]" fill="none" aria-hidden="true">
        <ellipse cx="52" cy="27" rx="49" ry="23" stroke="#fb3a3a" strokeWidth="6" />
      </svg>
      <svg viewBox="0 0 104 54" className="pointer-events-none absolute top-[731px] left-[806px] h-[54px] w-[104px]" fill="none" aria-hidden="true">
        <ellipse cx="52" cy="27" rx="49" ry="22" stroke="#fb3a3a" strokeWidth="5.500" />
      </svg>
      <svg viewBox="0 0 142 98" className="pointer-events-none absolute top-[784px] left-[659px] h-[98px] w-[142px]" aria-hidden="true">
        <path d="M140 1.500L124.500 3l2.500 4.500L1 96.500l.8.700L131 12l3 3z" fill="#fb3a3a" />
      </svg>
    </div>
  );
}
